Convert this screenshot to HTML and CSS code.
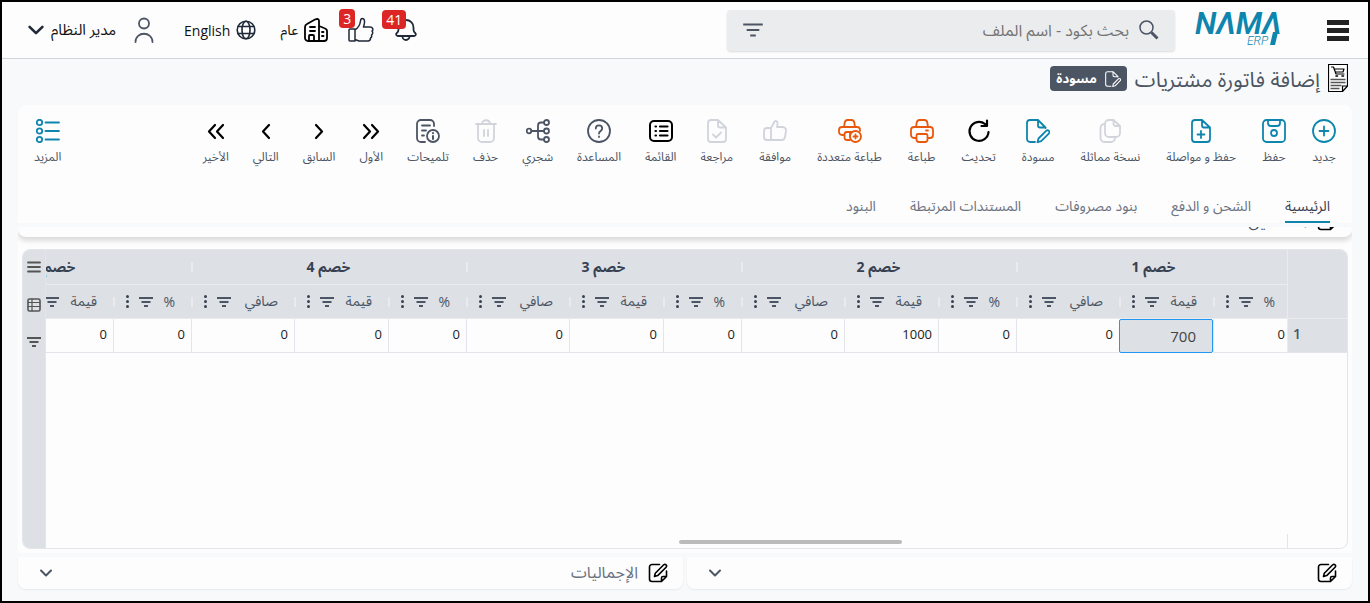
FILE: index.html
```
<!DOCTYPE html>
<html lang="ar" dir="rtl">
<head>
<meta charset="utf-8">
<title>إضافة فاتورة مشتريات</title>
<link rel="stylesheet" href="styles.css">
</head>
<body>
<svg class="defs" aria-hidden="true">
  <symbol id="filter" viewBox="0 0 14 10"><path d="M0 1h14M2.500 5h9M5 9h4" stroke-width="2" vector-effect="non-scaling-stroke"/></symbol>
  <symbol id="chev" viewBox="0 0 14 14"><path d="M2 4.500l5 5 5-5" stroke-width="2"/></symbol>
  <symbol id="note" viewBox="0 0 20 20"><path d="M11.500 1.500H4A2.500 2.500 0 0 0 1.500 4v12A2.500 2.500 0 0 0 4 18.500h9.500l5-5V8M13.500 18.300v-3.300a1.500 1.500 0 0 1 1.500-1.500h3.300M6.500 13.500l.8-3.300 8.400-8.400a1.700 1.700 0 0 1 2.400 2.400l-8.400 8.400z" stroke-width="1.600"/></symbol>
  <symbol id="draft" viewBox="0 0 24 24"><path d="M9 23H4a3 3 0 0 1-3-3V4a3 3 0 0 1 3-3h8l7.500 7.500v.5M12 1v5.500a2 2 0 0 0 2 2h5.500M12.500 19.500l7.600-7.600a1.900 1.900 0 0 1 2.700 2.700l-7.600 7.600-3.700 1z"/></symbol>
</svg>

<header class="topbar">
  <button class="burger" aria-label="القائمة الرئيسية"><span></span><span></span><span></span></button>
  <a class="logo" href="#" aria-label="NAMA ERP">
    <svg width="92" height="34" viewBox="0 0 92 34"><text class="logo-big" x="0" y="21">NΛMΛ</text><text class="logo-small" x="52" y="32">ERP</text><path d="M78 19h5l-3 13h-5z"/></svg>
  </a>
  <label class="search">
    <svg class="ic" width="20" height="20" viewBox="0 0 20 20"><circle cx="7.500" cy="7.500" r="6.500" stroke-width="1.500"/><path d="M12.500 12.500l6 6" stroke-width="3" stroke-linecap="butt"/></svg>
    <input type="text" placeholder="بحث بكود - اسم الملف" aria-label="بحث بكود - اسم الملف">
    <button class="plain" aria-label="تصفية"><svg class="ic" width="20" height="14"><use href="#filter"/></svg></button>
  </label>
  <nav class="user-nav">
    <button class="plain badge-box" aria-label="التنبيهات"><svg class="ic dark" width="24" height="24" viewBox="0 0 24 24"><path d="M4 18c-2 0-2.500-2-1-3.200 1-1 1.500-2 1.500-3.300V9.500a7.500 7.500 0 0 1 15 0v2c0 1.300.5 2.300 1.500 3.300 1.500 1.200 1 3.200-1 3.200zM8.500 18.500a3.500 3.500 0 0 0 7 0" stroke-width="1.800"/></svg><span class="badge">41</span></button>
    <button class="plain badge-box small" aria-label="الموافقات"><svg class="ic dark" width="26" height="26" viewBox="0 0 26 26"><path d="M2 12h5v12H2Q1 24 1 23v-10Q1 12 2 12zM7 13c3-2 5-5 5.500-9 .3-3.500 3.500-3.500 4 0 .3 2-.5 4-1 6h6.500c3 0 3.500 3 2 4 1 1 1 3-.5 4 .5 1.500 0 2.500-1 3 0 2-1 3-2.500 3h-9L7 22.500" stroke-width="1.500"/></svg><span class="badge">3</span></button>
    <button class="plain"><svg class="ic black" width="24" height="24" viewBox="0 0 24 24"><path d="M15 23H4a3 3 0 0 1-3-3V9q0-2 2-3l8-4.500Q15 0 15 3zM15 8l5 2q3 1 3 3v7a3 3 0 0 1-3 3h-5M5 23v-5q0-1 1-1h3q1 0 1 1v5M6 9h5M6 13h5M18 14h1.500M18 18h1.500" stroke-width="1.800"/></svg><span>عام</span></button>
    <button class="plain lang"><svg class="ic dark" width="20" height="20" viewBox="0 0 20 20"><circle cx="10" cy="10" r="8.800"/><ellipse cx="10" cy="10" rx="4" ry="8.800"/><path d="M2 6.500h16M2 13.500h16"/></svg><span>English</span></button>
    <button class="plain user"><svg class="ic" width="20" height="26" viewBox="0 0 20 26"><circle cx="10" cy="6.500" r="5" stroke-width="1.800"/><path d="M1.500 25c0-11 17-11 17 0" stroke-width="1.800"/></svg><span>مدير النظام</span><svg class="ic dark" width="18" height="18"><use href="#chev"/></svg></button>
  </nav>
</header>

<div class="title-row">
  <svg class="ic black" width="20" height="28" viewBox="0 0 20 28"><path d="M.5.5h19V22l-5 5.500H.5zM19 22h-4.500v5" fill="#fff" stroke-width="1.200"/><path d="M3.500 3h2l2.500 7h8M6 5h10l-1 3H7.500" stroke-width="1.200"/><path d="M8 12h1.500M14 12h1.500" stroke-width="1.600"/><path d="M2.500 15.500h15M2.500 18.500h15M2.500 21.500h11M2.500 24.500h9" stroke="#555" stroke-width="1.600" stroke-linecap="butt"/></svg>
  <h1>إضافة فاتورة مشتريات</h1>
  <span class="status"><svg class="ic" width="16" height="16"><use href="#draft"/></svg>مسودة</span>
</div>

<main>
<section class="card">
  <div class="toolbar">
    <div class="tools edit">
    <button class="tool blue"><svg class="ic" viewBox="0 0 24 24"><circle cx="12" cy="12" r="11"/><path d="M12 7.500v9M7.500 12h9"/></svg>جديد</button>
    <button class="tool blue"><svg class="ic" viewBox="0 0 24 24"><rect x="1" y="1" width="22" height="22" rx="3.500"/><path d="M6 1.500v2.500a3 3 0 0 0 3 3h6a3 3 0 0 0 3-3V1.500"/><circle cx="12" cy="14" r="3"/></svg>حفظ</button>
    <button class="tool blue"><svg class="ic" viewBox="0 0 24 24"><path d="M13 1H6a3 3 0 0 0-3 3v16a3 3 0 0 0 3 3h12a3 3 0 0 0 3-3V8.500zM13 1v5.500a2 2 0 0 0 2 2h6M12 12v7M8.500 15.500h7"/></svg>حفظ و مواصلة</button>
    <button class="tool off"><svg class="ic" viewBox="0 0 24 24"><path d="M15.500 1H11a4 4 0 0 0-4 4v9a4 4 0 0 0 4 4h7a4 4 0 0 0 4-4V7zM15.500 1v4a2 2 0 0 0 2 2H22M7 5a4 4 0 0 0-4.500 4v10a4 4 0 0 0 4 4H13a4 4 0 0 0 4-4"/></svg>نسخة مماثلة</button>
    <button class="tool blue"><svg class="ic"><use href="#draft"/></svg>مسودة</button>
    <button class="tool black"><svg class="ic" viewBox="0 0 24 24"><path d="M21.500 13A9.500 9.500 0 1 1 18 5l2 1.500M20 1.500v5.500h-5.500" stroke-width="2.200"/></svg>تحديث</button>
    <button class="tool orange"><svg class="ic" viewBox="0 0 24 24"><path d="M6.500 19H4a3 3 0 0 1-3-3v-5a3 3 0 0 1 3-3h16a3 3 0 0 1 3 3v5a3 3 0 0 1-3 3h-2.500M6 8l.7-4.500A3 3 0 0 1 9.500 1h5a3 3 0 0 1 2.800 2.500L18 8M8 15h8q1.500 0 1.500 1.500v4q0 2.500-2.500 2.500H9q-2.500 0-2.500-2.500v-4Q6.500 15 8 15zM16 11.500h2"/></svg>طباعة</button>
    <button class="tool orange"><svg class="ic" viewBox="0 0 24 24"><path d="M6.500 16H4a3 3 0 0 1-3-3v-2a3 3 0 0 1 3-3h15a3 3 0 0 1 3 3v1M6 8l.7-4.500A3 3 0 0 1 9.500 1h4a3 3 0 0 1 2.800 2.500L17 8M12 21H9q-2.500 0-2.500-2.500v-3Q6.500 13 9 13h5M12 13v5"/><circle cx="17.500" cy="17.500" r="5.500"/><path d="M17.500 15.500v4M15.500 17.500h4"/></svg>طباعة متعددة</button>
    <button class="tool off"><svg class="ic" viewBox="0 0 24 24"><path d="M8 9H4a3 3 0 0 0-3 3v6a3 3 0 0 0 3 3h4zM8 9l3-5.500C12 1 15 2 14.500 5L14 8h5.500A3.500 3.500 0 0 1 23 12l-1 6a3.500 3.500 0 0 1-3.500 3H8"/></svg>موافقة</button>
    <button class="tool off"><svg class="ic" viewBox="0 0 24 24"><path d="M13 1H6a3 3 0 0 0-3 3v16a3 3 0 0 0 3 3h12a3 3 0 0 0 3-3V8.500zM13 1v5.500a2 2 0 0 0 2 2h6M8 15.500l3 3 5-5"/></svg>مراجعة</button>
    </div>
    <div class="tools">
    <button class="tool black"><svg class="ic" viewBox="0 0 24 24"><rect x="1" y="2" width="22" height="20" rx="4" stroke-width="2"/><path d="M11 7.500h7.500M11 12h7.500M11 16.500h7.500M6.500 7.500h.5M6.500 12h.5M6.500 16.500h.5" stroke-width="2.200"/></svg>القائمة</button>
    <button class="tool"><svg class="ic" viewBox="0 0 24 24"><circle cx="12" cy="12" r="11"/><path d="M8.800 9.500c0-4.200 6.400-4.200 6.400 0 0 2.500-3.200 2.500-3.200 5M12 17.500v.5"/></svg>المساعدة</button>
    <button class="tool"><svg class="ic" viewBox="0 0 24 24"><circle cx="3" cy="12" r="2.300"/><circle cx="20.500" cy="3.500" r="2.500"/><circle cx="20.500" cy="12" r="2.500"/><circle cx="20.500" cy="20.500" r="2.500"/><path d="M5.500 12H18M18 3.500h-3a3 3 0 0 0-3 3v11a3 3 0 0 0 3 3h3"/></svg>شجري</button>
    <button class="tool off"><svg class="ic" viewBox="0 0 24 24"><path d="M4 5v14a4 4 0 0 0 4 4h8a4 4 0 0 0 4-4V5M2 5h20M8 5c0-5 8-5 8 0M10 11v6M14 11v6"/></svg>حذف</button>
    <button class="tool"><svg class="ic" viewBox="0 0 24 24"><path d="M9 23H5a4 4 0 0 1-4-4V5a4 4 0 0 1 4-4h9a4 4 0 0 1 4 4v2M6 6.500h8M6 11.500h4M6 16.500h2"/><circle cx="17" cy="17" r="6"/><path d="M17 14v.2M17 17v3" stroke-width="2"/></svg>تلميحات</button>
    <button class="tool black"><svg class="ic" viewBox="0 0 24 24"><path d="M5 6l6 6.500-6 6.500M13 6l6 6.500-6 6.500" stroke-width="2.200"/></svg>الأول</button>
    <button class="tool black"><svg class="ic" viewBox="0 0 24 24"><path d="M9 6l6 6.500-6 6.500" stroke-width="2.200"/></svg>السابق</button>
    <button class="tool black"><svg class="ic" viewBox="0 0 24 24"><path d="M15 6l-6 6.500 6 6.500" stroke-width="2.200"/></svg>التالي</button>
    <button class="tool black"><svg class="ic" viewBox="0 0 24 24"><path d="M11 6l-6 6.500 6 6.500M19 6l-6 6.500 6 6.500" stroke-width="2.200"/></svg>الأخير</button>
    </div>
    <button class="tool blue more"><svg class="ic" viewBox="0 0 24 24"><circle cx="3.500" cy="3.500" r="2.700"/><circle cx="3.500" cy="12" r="2.700"/><circle cx="3.500" cy="20.500" r="2.700"/><path d="M9.500 3.500H23M9.500 12H23M9.500 20.500H23"/></svg>المزيد</button>
  </div>
  <nav class="tabs">
    <a class="active" href="#">الرئيسية</a><a href="#">الشحن و الدفع</a><a href="#">بنود مصروفات</a><a href="#">المستندات المرتبطة</a><a href="#">البنود</a>
  </nav>
</section>

<section class="peek"><svg class="ic black" width="20" height="20"><use href="#note"/></svg><span>التفاصيل</span></section>

<section class="panel">
  <div class="grid">
    <div class="pin-col">
      <table class="pinned">
        <thead><tr><th></th></tr></thead>
        <tbody><tr><td>1</td></tr></tbody>
      </table>
      <div class="pin-foot"></div>
    </div>
    <div class="viewport">
      <table class="data">
        <colgroup><col class="pct"><col class="val"><col class="net"><col class="pct"><col class="val"><col class="net"><col class="pct"><col class="val"><col class="net"><col class="pct"><col class="val"><col class="net"><col class="pct"><col class="val"><col class="net"></colgroup>
        <thead>
          <tr class="groups"><th colspan="3">خصم 1</th><th colspan="3">خصم 2</th><th colspan="3">خصم 3</th><th colspan="3">خصم 4</th><th colspan="3">خصم 5</th></tr>
          <tr class="cols" id="cols"></tr>
        </thead>
        <tbody><tr id="values"></tr></tbody>
      </table>
      <div class="scroll"></div>
    </div>
    <div class="side">
      <button class="plain" aria-label="القائمة"><svg class="ic gray" width="14" height="12" viewBox="0 0 14 12"><path d="M1 1.500h12M1 6h12M1 10.500h12" stroke-width="1.800"/></svg></button>
      <button class="plain" aria-label="الأعمدة"><svg class="ic gray" width="14" height="14" viewBox="0 0 14 14"><rect x="1" y="1" width="12" height="12" rx="1.500"/><path d="M5 1v12M1 4.500h12M1 8.500h12" stroke-width="1.200"/></svg></button>
      <button class="plain" aria-label="تصفية"><svg class="ic gray" width="14" height="10"><use href="#filter"/></svg></button>
    </div>
  </div>
</section>

<div class="bottoms">
  <section class="fold"><svg class="ic black" width="20" height="20"><use href="#note"/></svg><span></span><button class="plain" aria-label="توسيع"><svg class="ic" width="14" height="14"><use href="#chev"/></svg></button></section>
  <section class="fold"><svg class="ic black" width="20" height="20"><use href="#note"/></svg><span>الإجماليات</span><button class="plain" aria-label="توسيع"><svg class="ic" width="14" height="14"><use href="#chev"/></svg></button></section>
</div>
</main>
<script src="grid.js"></script>
</body>
</html>
```
FILE: grid.js
```
const labels = ['%', 'قيمة', 'صافي'];
const values = [0, 700, 0, 0, 1000, 0, 0, 0, 0, 0, 0, 0, 0, 0, 0];
const tools = '<svg class="ic" width="14" height="10"><use href="#filter"/></svg>' +
  '<svg class="dots" width="3" height="13" viewBox="0 0 3 13"><circle cx="1.500" cy="1.500" r="1.500"/><circle cx="1.500" cy="6.500" r="1.500"/><circle cx="1.500" cy="11.500" r="1.500"/></svg>';

document.getElementById('cols').innerHTML = values
  .map((v, i) => `<th><div class="head"><span>${labels[i % 3]}</span>${tools}</div></th>`)
  .join('');

document.getElementById('values').innerHTML = values
  .map((v, i) => i === 1
    ? `<td class="editing"><input type="text" value="${v}" aria-label="قيمة خصم 1"></td>`
    : `<td>${v}</td>`)
  .join('');
```
FILE: styles.css
```
* { box-sizing: border-box; }
body {
  margin: 0;
  min-height: 100vh;
  border: 2px solid #000;
  background: #f8f9fb;
  color: #4b5563;
  font: 14px "Open Sans", "Noto Sans Arabic", "DejaVu Sans", sans-serif;
  display: flex;
  flex-direction: column;
  overflow: hidden;
}
button, input { font: inherit; color: inherit; }
.defs { position: absolute; width: 0; height: 0; }
.ic { flex: none; fill: none; stroke: #4b5563; stroke-width: 1.6px; stroke-linecap: round; stroke-linejoin: round; }
.ic.dark { stroke: #1f2937; }
.ic.black { stroke: #000; }
.ic.gray { stroke: #555; }
#filter { stroke-linecap: butt; }
.plain { border: 0; background: none; padding: 0; display: flex; align-items: center; gap: 6px; }

.topbar {
  height: 57px;
  background: #fdfdfe;
  border-bottom: 1px solid #d1d5db;
  display: flex;
  align-items: center;
  padding: 0 19px 0 25px;
}
.burger { border: 0; background: none; padding: 0; width: 22px; display: grid; gap: 3px; }
.burger span { height: 5px; background: #222; }
.logo { margin-right: 40px; display: flex; direction: ltr; }
.logo svg { fill: #0e85ad; overflow: visible; }
.logo-big { font: italic 600 31px Roboto, sans-serif; }
.logo-small { font: italic 300 12px Roboto, sans-serif; }
.search {
  width: 448px;
  height: 41px;
  margin-right: 20px;
  padding: 0 16px;
  background: #ebecee;
  border-radius: 4px;
  box-shadow: 0 1px 2px #0002;
  display: flex;
  align-items: center;
  gap: 10px;
}
.search input { flex: 1; min-width: 0; border: 0; background: none; padding: 0; outline: 0; font-size: 16px; }
.search input::placeholder { color: #757575; }
.user-nav { margin-right: auto; display: flex; align-items: center; color: #111; gap: 20px; }
.badge-box { position: relative; }
.badge {
  position: absolute;
  top: -8px;
  right: 12px;
  padding: 0 4px;
  line-height: 19px;
  border-radius: 4px;
  background: #dc2626;
  color: #fff;
}
.small .badge { right: 19px; }
.lang { margin: 0 4px 0 10px; }
.user { font-size: 15px; }
.user span { margin-right: 12px; }

.title-row { height: 46px; display: flex; align-items: flex-start; padding: 5px 20px 0; gap: 8px; }
h1 { margin: 0; font-size: 21px; font-weight: 400; line-height: 30px; }
.status {
  margin-top: 2px;
  height: 25px;
  padding: 0 6px;
  border-radius: 4px;
  background: #4b5563;
  color: #fff;
  font-size: 13px;
  font-weight: 700;
  display: flex;
  align-items: center;
  gap: 8px;
}
.status .ic { stroke: #fff; }

main { flex: 1; display: flex; flex-direction: column; padding: 0 16px 12px; }
.card { background: #fdfdfe; border-radius: 8px 8px 0 0; }
.toolbar, .tools { display: flex; gap: 24px; }
.toolbar { padding: 14px 16px 0; }
.tools.edit { gap: 26px; }
.tool {
  border: 0;
  background: none;
  padding: 0;
  min-width: 24px;
  display: flex;
  flex-direction: column;
  align-items: center;
  gap: 4px;
  font-size: 12px;
  line-height: 20px;
  white-space: nowrap;
}
.tool .ic { width: 24px; height: 24px; stroke-width: 1.8px; }
.tool.blue .ic { stroke: #0e85ad; }
.tool.black .ic { stroke: #000; }
.tool.orange .ic { stroke: #ea580c; }
.tool.off .ic { stroke: #d1d5db; }
.more { margin-right: auto; }
.tabs { display: flex; gap: 34px; padding: 24px 22px 0; }
.tabs a { color: #6b7280; text-decoration: none; line-height: 29px; height: 32px; border-bottom: 2px solid transparent; }
.tabs .active { color: #374151; border-color: #0e85ad; }
.peek {
  height: 10px;
  margin-top: 4px;
  padding: 0 15px 6px;
  background: #fdfdfe;
  border-radius: 0 0 8px 8px;
  box-shadow: 0 4px 5px #0002;
  clip-path: inset(0 0 -12px);
  display: flex;
  align-items: flex-end;
  gap: 10px;
  font-size: 16px;
  line-height: 20px;
}

.panel { flex: 1; background: #fdfdfe; padding: 12px 4px 4px; display: flex; }
.grid { flex: 1; min-width: 0; border: 1px solid #e2e5e9; border-radius: 8px; overflow: hidden; display: flex; }
table { border-collapse: separate; border-spacing: 0; table-layout: fixed; }
th, td { padding: 0; }
.pin-col { width: 60px; flex: none; display: flex; flex-direction: column; justify-content: space-between; }
.pinned { width: 100%; background: #dde0e5; border-left: 1px solid #e9ebee; }
.pinned th { height: 69px; border-bottom: 1px solid #e9ebee; }
.pinned td { height: 34px; padding: 0 5px 4px; border-bottom: 1px solid #e2e5e9; font-weight: 600; text-align: left; }
.pin-foot { height: 14px; border-left: 1px solid #e2e5e9; }
.viewport { flex: 1; min-width: 0; overflow: hidden; display: flex; flex-direction: column; }
.data { width: 1375px; margin-right: -4px; }
.pct { width: 78px; }
.val { width: 94px; }
.net { width: 103px; }
.data th { background: #dde0e5; border-bottom: 1px solid #e9ebee; }
.groups th {
  height: 35px;
  color: #374151;
  background: linear-gradient(#e9ebee, #e9ebee) left center / 2px 10px no-repeat #dde0e5;
}
.cols th { height: 34px; font-weight: 400; }
.head { display: flex; align-items: center; padding: 0 16px 0 11px; border-left: 2px solid #e9ebee; height: 10px; white-space: nowrap; }
.head span { flex: 1; text-align: right; }
.head .dots { margin-right: 10px; fill: #374151; }
.data td { height: 34px; padding: 0 6px 4px; border-bottom: 1px solid #e2e5e9; border-left: 1px solid #e2e5e9; color: #222; font-size: 13px; }
.data .editing { padding: 0; border: 0; }
.editing input {
  display: block;
  width: 100%;
  height: 34px;
  border: 1px solid #2196f3;
  border-radius: 2px;
  background: #dde0e5;
  padding: 0 16px;
  outline: 0;
  font-size: 15px;
  color: #444;
}
.scroll { margin: auto 385px 4px auto; width: 223px; height: 4px; border-radius: 2px; background: #bbb; }
.side { width: 23px; flex: none; background: #dde0e5; border-right: 1px solid #e2e5e9; display: flex; flex-direction: column; align-items: center; padding-top: 11px; gap: 25px; }

.bottoms { display: grid; grid-template-columns: 1fr 1fr; gap: 4px; margin-top: 4px; }
.fold { height: 32px; background: #fdfdfe; border-radius: 0 0 8px 8px; box-shadow: 0 1px 2px #0001; padding: 0 15px 0 21px; display: flex; align-items: center; gap: 10px; font-size: 16px; color: #6b7280; }
.fold .plain { margin-right: auto; }
```
